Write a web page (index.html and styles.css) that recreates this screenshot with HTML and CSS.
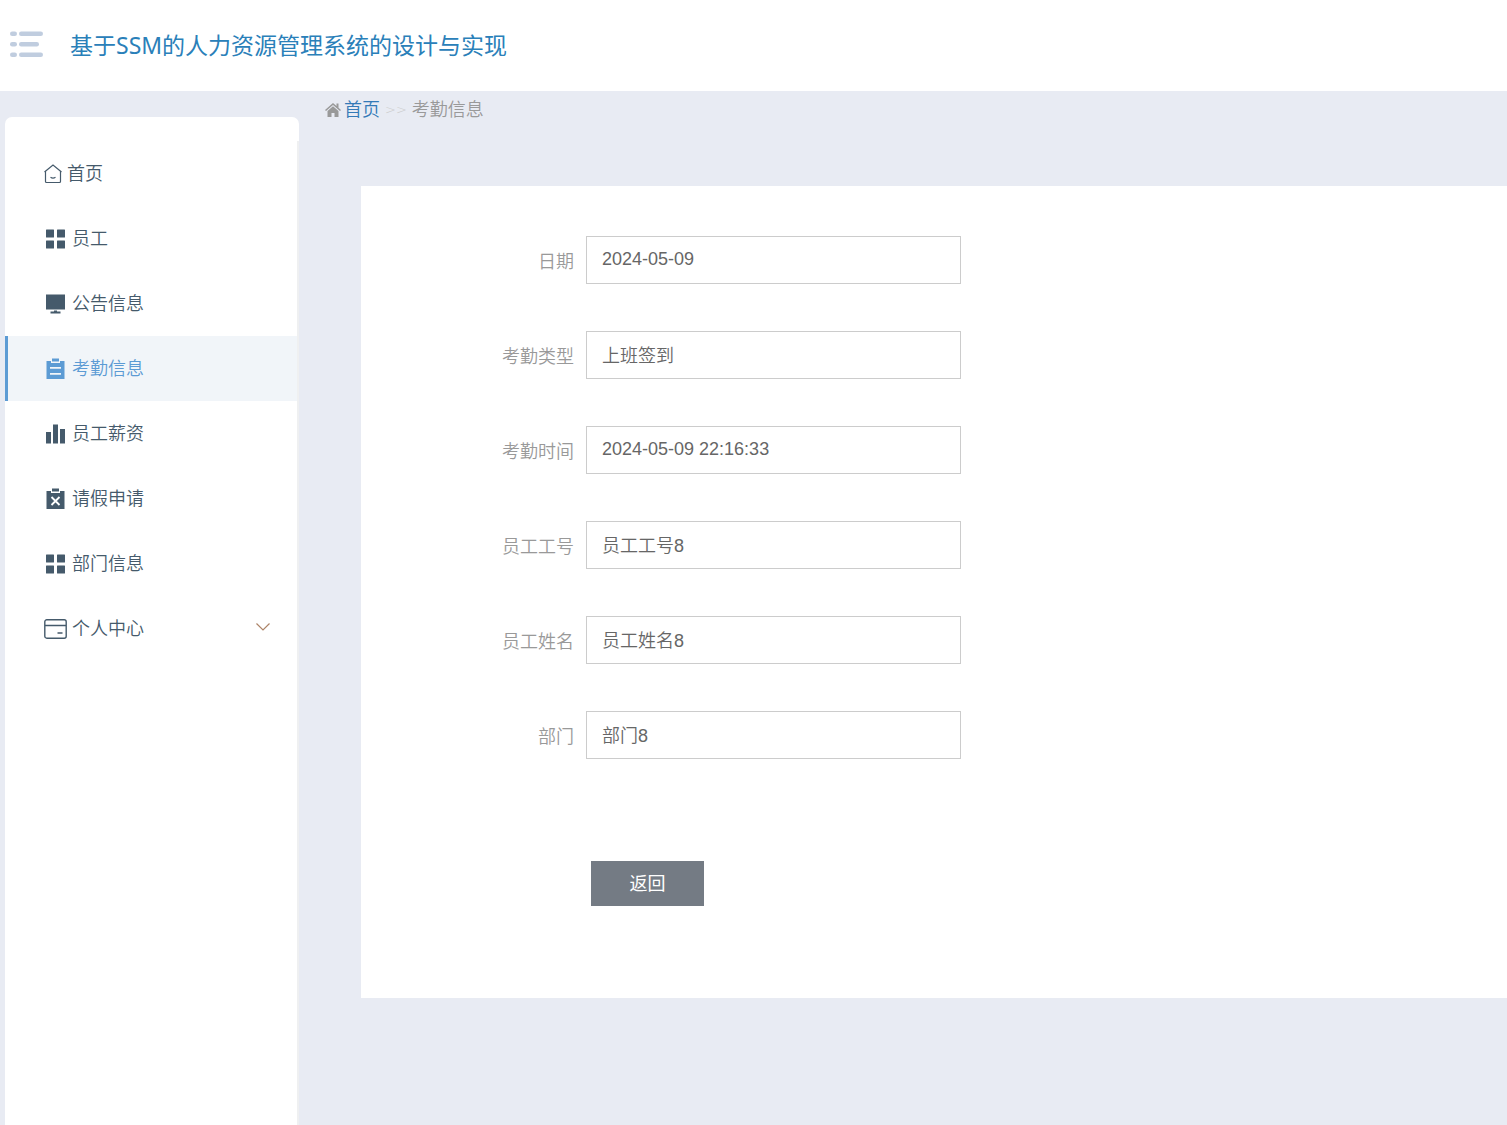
FILE: index.html
```html
<!DOCTYPE html>
<html lang="zh-CN">
<head>
    <meta charset="UTF-8">
    <meta name="viewport" content="width=device-width, initial-scale=1.0">
    <title>考勤信息</title>
    <link rel="stylesheet" href="styles.css">
</head>
<body>
    <header class="header">
        <button type="button" class="menu-toggle" aria-label="菜单">
            <svg width="34" height="28" viewBox="0 0 34 28" fill="#c0cddf">
                <rect x="0" y="0.500" width="7" height="4.500" rx="2.2"/>
                <rect x="9" y="0.500" width="24" height="4.500" rx="2.2"/>
                <rect x="0" y="11" width="7" height="4.500" rx="2.2"/>
                <rect x="9" y="11" width="20" height="4.500" rx="2.2"/>
                <rect x="0" y="21.500" width="7" height="4.500" rx="2.2"/>
                <rect x="9" y="21.500" width="24" height="4.500" rx="2.2"/>
            </svg>
        </button>
        <a class="brand" href="#">基于SSM的人力资源管理系统的设计与实现</a>
    </header>

    <div class="layout">
        <nav class="sidebar">
            <ul class="menu">
                <li><a href="#">
                    <svg width="18" height="20" viewBox="0 0 18 20" fill="none" stroke="currentColor" stroke-width="1.2">
                        <path d="M0.5 8 9 1l8.500 7M1.500 7.500V17.500q0 1 1 1h13q1 0 1-1V7.500"/>
                        <path d="M6.500 13.300q2.500 1.600 5 0"/>
                    </svg>首页</a></li>
                <li><a href="#">
                    <svg width="23" height="20" viewBox="0 0 23 20" fill="currentColor">
                        <rect x="2" y="0.500" width="8" height="8" rx="0.500"/>
                        <rect x="13" y="0.500" width="8" height="8" rx="0.500"/>
                        <rect x="2" y="11.500" width="8" height="8" rx="0.500"/>
                        <rect x="13" y="11.500" width="8" height="8" rx="0.500"/>
                    </svg>员工</a></li>
                <li><a href="#">
                    <svg width="23" height="20" viewBox="0 0 23 20" fill="currentColor">
                        <path d="M2 0.500h19v15H2zM10 16.500h3v1h3.500v2h-10v-2H10z"/>
                    </svg>公告信息</a></li>
                <li class="active"><a href="#">
                    <svg width="23" height="22" viewBox="0 0 23 22" fill="currentColor">
                        <path d="M8 0.500h7v3H8z"/>
                        <path fill-rule="evenodd" d="M2.500 3H7v2h9V3h4.500v18h-18zM6 9v1.800h11V9zM6 15v1.800h11V15z"/>
                    </svg>考勤信息</a></li>
                <li><a href="#">
                    <svg width="23" height="20" viewBox="0 0 23 20" fill="currentColor">
                        <path d="M2 8h5v11.500H2zM9 0.500h5v19H9zM16 5h5v14.500h-5z"/>
                    </svg>员工薪资</a></li>
                <li><a href="#">
                    <svg width="23" height="22" viewBox="0 0 23 22">
                        <path fill="currentColor" d="M8 0.500h7v3H8zM2.500 3H7v2h9V3h4.500v18h-18z"/>
                        <path stroke="#fff" stroke-width="1.800" d="M7.500 9l8 8M15.500 9l-8 8"/>
                    </svg>请假申请</a></li>
                <li><a href="#">
                    <svg width="23" height="20" viewBox="0 0 23 20" fill="currentColor">
                        <rect x="2" y="0.500" width="8" height="8" rx="0.500"/>
                        <rect x="13" y="0.500" width="8" height="8" rx="0.500"/>
                        <rect x="2" y="11.500" width="8" height="8" rx="0.500"/>
                        <rect x="13" y="11.500" width="8" height="8" rx="0.500"/>
                    </svg>部门信息</a></li>
                <li><a href="#">
                    <svg width="23" height="20" viewBox="0 0 23 20" fill="none" stroke="currentColor" stroke-width="1.400">
                        <rect x="0.800" y="0.800" width="21.400" height="18.400" rx="2"/>
                        <path d="M1 6.500h21M13.500 14h5"/>
                    </svg>个人中心
                    <svg class="arrow" width="16" height="14" viewBox="0 0 16 14" fill="none" stroke="#ad8468" stroke-width="1.200">
                        <path d="M1.500 1.500 8 8l6.500-6.500"/>
                    </svg></a></li>
            </ul>
        </nav>

        <main class="content">
            <div class="breadcrumb">
                <svg width="16" height="14" viewBox="0 0 16 14" fill="#999">
                    <path d="M8 0 0 7l1 1 7-6 7 6 1-1-2.500-2.200V0.500h-2v2.600z"/>
                    <path d="M8 3.200 2.500 8v6h4v-4h3v4h4V8z"/>
                </svg>
                <a href="#">首页</a>
                <span class="separator">&gt;&gt;</span>
                <span>考勤信息</span>
            </div>

            <form class="panel">
                <div class="form-row">
                    <label for="riqi">日期</label>
                    <input type="text" id="riqi" value="2024-05-09" readonly>
                </div>
                <div class="form-row">
                    <label for="leixing">考勤类型</label>
                    <input type="text" id="leixing" value="上班签到" readonly>
                </div>
                <div class="form-row">
                    <label for="shijian">考勤时间</label>
                    <input type="text" id="shijian" value="2024-05-09 22:16:33" readonly>
                </div>
                <div class="form-row">
                    <label for="gonghao">员工工号</label>
                    <input type="text" id="gonghao" value="员工工号8" readonly>
                </div>
                <div class="form-row">
                    <label for="xingming">员工姓名</label>
                    <input type="text" id="xingming" value="员工姓名8" readonly>
                </div>
                <div class="form-row">
                    <label for="bumen">部门</label>
                    <input type="text" id="bumen" value="部门8" readonly>
                </div>
                <button type="button" class="btn-back">返回</button>
            </form>
        </main>
    </div>
</body>
</html>
```
FILE: styles.css
```css
* {
    box-sizing: border-box;
}

body {
    display: flex;
    flex-direction: column;
    min-height: 100vh;
    margin: 0;
    background-color: #e8ebf3;
    color: #999;
    font-family: "Liberation Sans", "Noto Sans CJK SC", sans-serif;
    font-size: 18px;
    font-weight: 350;
    line-height: 24px;
}

a {
    color: #337ab7;
    text-decoration: none;
}

.header {
    display: flex;
    align-items: center;
    gap: 26px;
    padding: 30px 10px 31px;
    background-color: #fff;
}

.menu-toggle {
    display: flex;
    padding: 0;
    border: none;
    background: none;
    cursor: pointer;
}

.brand {
    color: #2a80b9;
    font-family: "Noto Sans", "Noto Sans CJK SC", sans-serif;
    font-size: 23px;
    font-weight: 400;
    line-height: 30px;
}

.layout {
    display: flex;
    flex: 1;
}

/* sidebar */
.sidebar {
    display: flex;
    flex-direction: column;
    width: 294px;
    flex-shrink: 0;
    margin: 26px 0 0 5px;
    padding-top: 24px;
    border-radius: 7px 7px 0 0;
    background-color: #fff;
}

.menu {
    flex: 1;
    margin: 0;
    padding: 0;
    border-right: 2px solid #eff0f1;
    list-style: none;
}

.menu a {
    display: flex;
    align-items: center;
    gap: 5px;
    height: 65px;
    padding: 0 26px 0 36px;
    border-left: 3px solid transparent;
    color: #455a6b;
}

.menu .active a {
    border-left-color: #5c9bd4;
    background-color: #f1f5f9;
    color: #5c9bd4;
}

.menu .arrow {
    margin-left: auto;
}

/* content */
.content {
    flex: 1;
    min-width: 0;
}

.breadcrumb {
    display: flex;
    align-items: center;
    gap: 3px;
    padding: 7px 26px 5px;
}

.separator {
    padding: 0 2px;
    color: #ccc;
    font-family: "DejaVu Sans", sans-serif;
    font-size: 13px;
}

.panel {
    margin: 59px 0 0 62px;
    padding: 50px 0 92px;
    background-color: #fff;
}

.form-row {
    display: flex;
    align-items: center;
    margin-bottom: 47px;
}

.form-row label {
    width: 225px;
    padding: 3px 12px 0 0;
    text-align: right;
}

.form-row input {
    width: 375px;
    height: 48px;
    padding: 0 15px 2px;
    border: 1px solid #ccc;
    background-color: #fff;
    color: #666;
    font: inherit;
    outline: none;
}

.btn-back {
    display: block;
    min-width: 113px;
    height: 45px;
    margin: 102px 0 0 230px;
    padding: 0 38px;
    border: none;
    background-color: #747b84;
    color: #fff;
    font: inherit;
    font-weight: 400;
    cursor: pointer;
}
```
